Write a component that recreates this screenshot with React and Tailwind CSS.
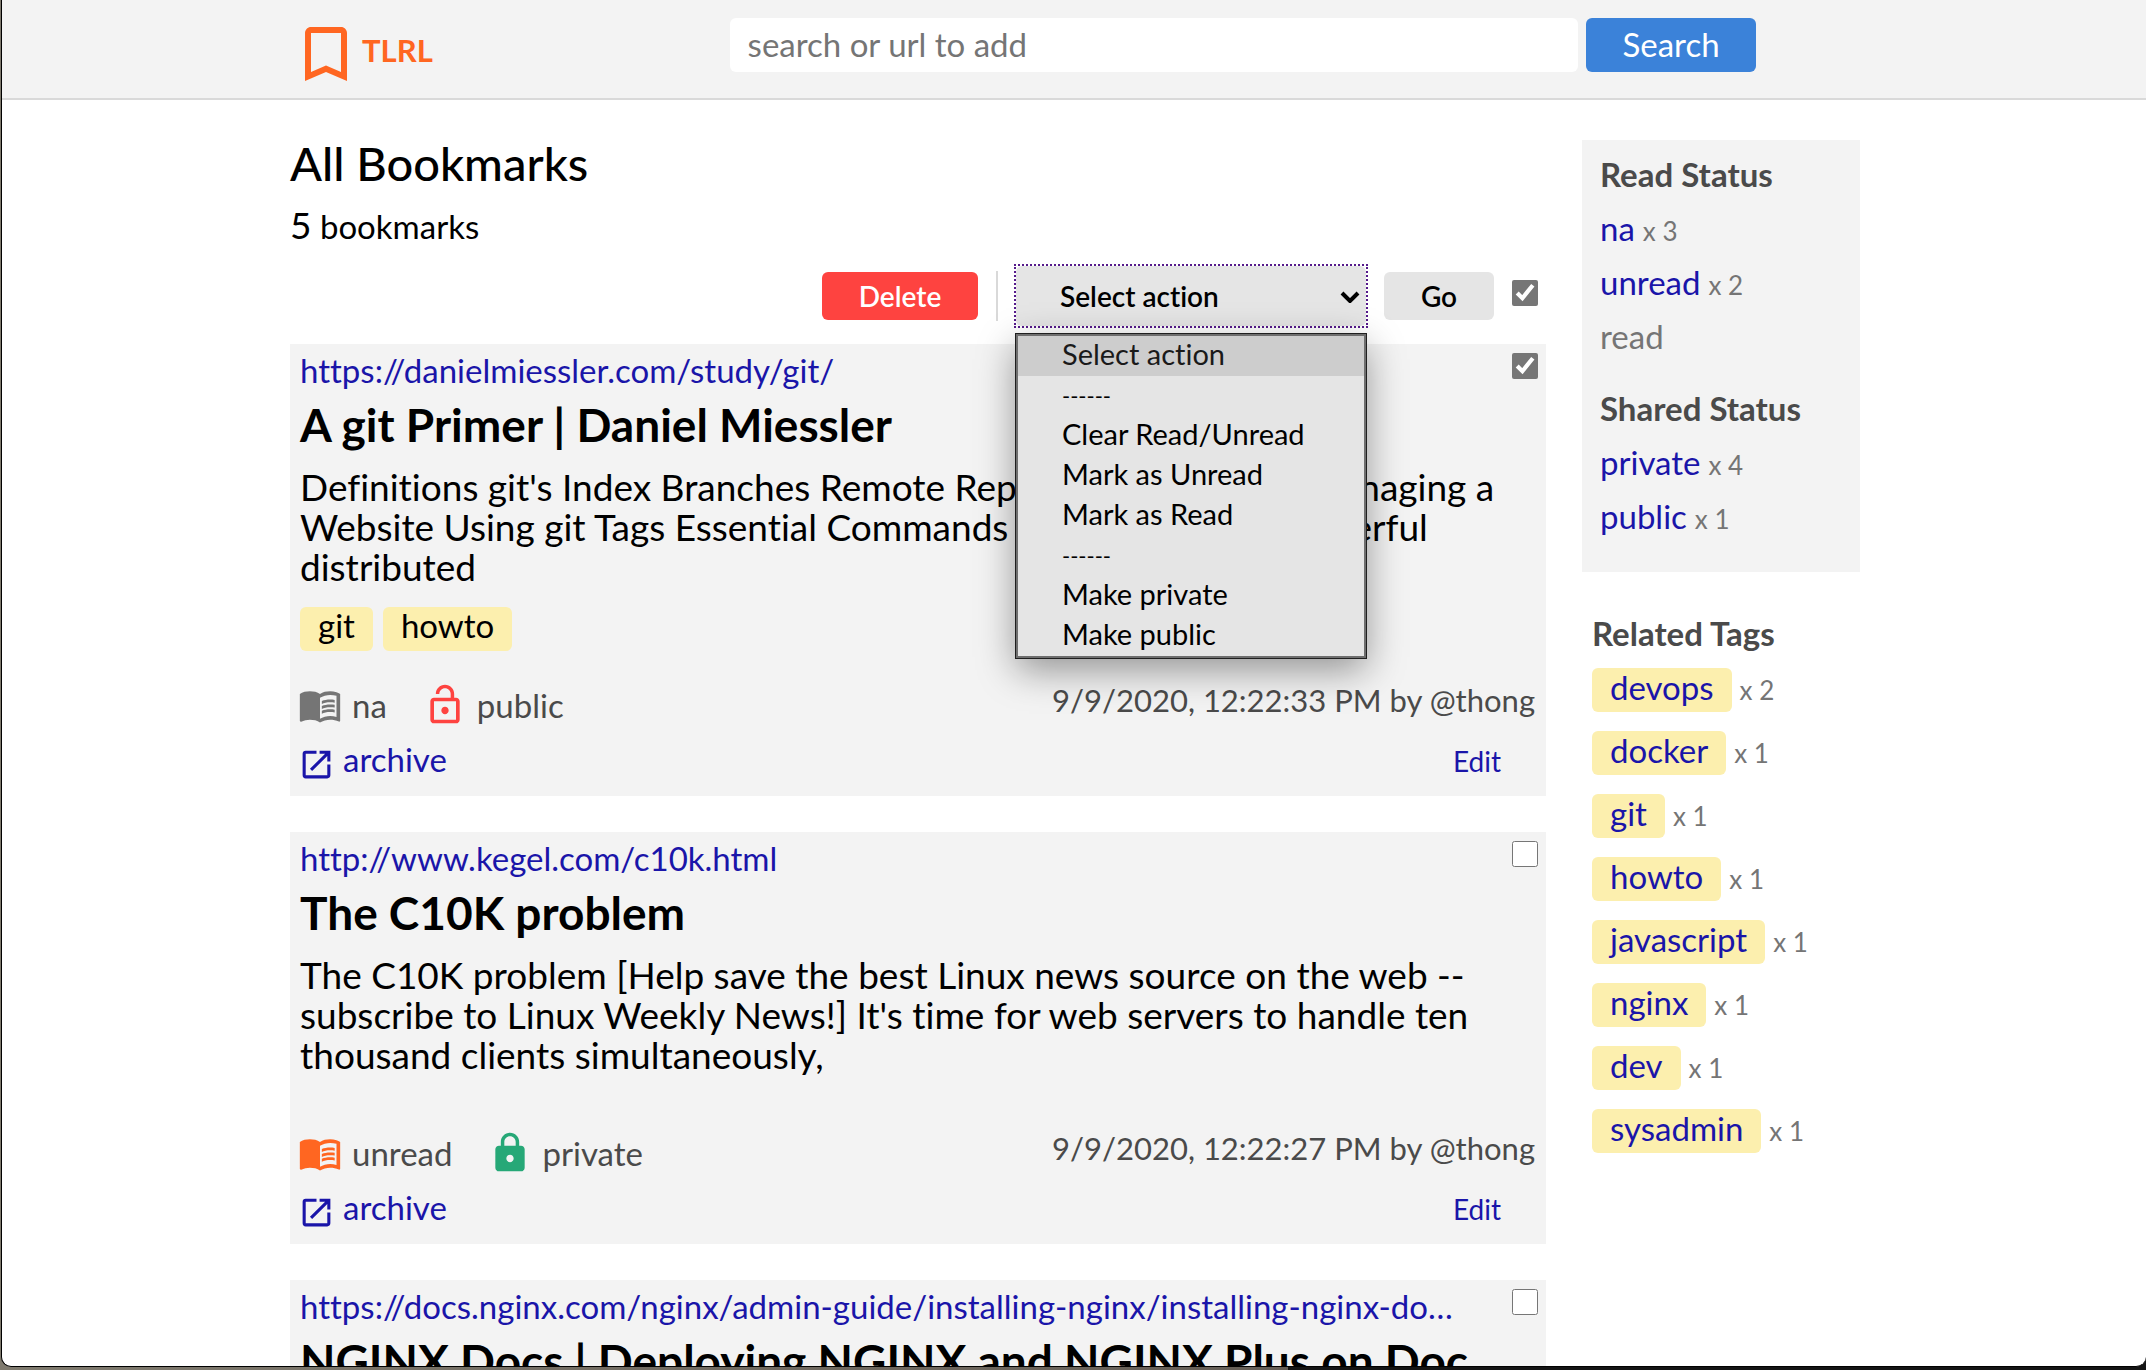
import React from "react";
import { MdBookmarkBorder, MdLock, MdLockOpen, MdMenuBook, MdOpenInNew } from "react-icons/md";

const actions = [
  "Select action",
  "------",
  "Clear Read/Unread",
  "Mark as Unread",
  "Mark as Read",
  "------",
  "Make private",
  "Make public",
];

const bookmarks = [
  {
    id: "git-primer",
    url: "https://danielmiessler.com/study/git/",
    title: "A git Primer | Daniel Miessler",
    text: "Definitions git's Index Branches Remote Repositories Tracking Managing a Website Using git Tags Essential Commands Git is a modern, powerful distributed",
    tags: ["git", "howto"],
    read: "na",
    shared: "public",
    date: "9/9/2020, 12:22:33 PM",
    checked: true,
  },
  {
    id: "c10k",
    url: "http://www.kegel.com/c10k.html",
    title: "The C10K problem",
    text: "The C10K problem [Help save the best Linux news source on the web -- subscribe to Linux Weekly News!] It's time for web servers to handle ten thousand clients simultaneously,",
    tags: [],
    read: "unread",
    shared: "private",
    date: "9/9/2020, 12:22:27 PM",
    checked: false,
  },
  {
    id: "nginx-docs",
    url: "https://docs.nginx.com/nginx/admin-guide/installing-nginx/installing-nginx-do…",
    title: "NGINX Docs | Deploying NGINX and NGINX Plus on Doc",
    checked: false,
  },
];

const readStatus = [["na", 3], ["unread", 2], ["read", 0]];
const sharedStatus = [["private", 4], ["public", 1]];
const relatedTags = [
  ["devops", 2],
  ["docker", 1],
  ["git", 1],
  ["howto", 1],
  ["javascript", 1],
  ["nginx", 1],
  ["dev", 1],
  ["sysadmin", 1],
];

function Check({ label, checked }) {
  return (
    <input
      type="checkbox"
      aria-label={label}
      defaultChecked={checked}
      className="size-[26px] shrink-0 accent-[#767676]"
    />
  );
}

function Header() {
  return (
    <header className="border-b-2 border-[#d9d9d9] bg-[#f3f3f3]">
      <div className="mx-auto flex h-[98px] max-w-[1572px] items-start pt-[18px] pl-0.5">
        <a href="#home" className="flex w-[28%] items-start text-[#ff6621]">
          <MdBookmarkBorder className="size-[72px]" aria-hidden="true" />
          <span className="text-[31px] leading-16 font-bold">TLRL</span>
        </a>
        <form className="mr-[104px] flex flex-1 gap-2" onSubmit={(e) => e.preventDefault()}>
          <input
            type="text"
            aria-label="search or url to add"
            placeholder="search or url to add"
            className="h-[54px] min-w-0 flex-1 rounded-md bg-white px-[18px] pb-0.5 text-[33px] placeholder:text-[#757575]"
          />
          <button type="submit" className="h-[54px] w-[170px] rounded-md bg-[#3b82d9] pb-0.5 text-[33px] leading-10 text-white">
            Search
          </button>
        </form>
      </div>
    </header>
  );
}

function Action({ text, selected }) {
  if (text.startsWith("-")) {
    return (
      <li role="option" aria-selected="false" className="h-10 pl-11 text-[22px] leading-10">
        {text}
      </li>
    );
  }
  return (
    <li
      role="option"
      aria-selected={selected}
      className={
        selected
          ? "h-10 bg-[#cdcdcd] pl-11 text-[29px] leading-9 text-[#1a1a1a]"
          : "h-10 pl-11 text-[29px] leading-9"
      }
    >
      {text}
    </li>
  );
}

function ActionSelect() {
  return (
    <div className="relative outline-2 outline-[#551a8b] outline-dotted">
      <select
        aria-label="Select action"
        className="block h-[60px] w-[350px] appearance-none rounded-md bg-[#e5e5e5] pl-11 text-[28px] font-semibold text-black"
      >
        <option>Select action</option>
      </select>
      <svg
        viewBox="0 0 20 12"
        className="pointer-events-none absolute top-[25px] right-1.5 h-3 w-5"
        fill="none"
        stroke="black"
        strokeWidth="4"
        aria-hidden="true"
      >
        <path d="M2 2l8 8 8-8" />
      </svg>
      <ul
        role="listbox"
        aria-label="Actions"
        className="absolute top-[68px] left-0 z-10 w-[350px] border-2 border-[#6e6e6e] bg-[#e5e5e5] shadow-[0_0_0_1px_#1f1f1f,0_12px_36px_rgba(0,0,0,0.4)]"
      >
        {actions.map((a, i) => (
          <Action key={i} text={a} selected={i === 0} />
        ))}
      </ul>
    </div>
  );
}

function Toolbar() {
  return (
    <div className="mt-5 mb-[18px] flex items-center justify-end gap-[18px] pr-2">
      <button type="button" className="h-12 w-[156px] rounded-md bg-[#fe4340] text-[28px] font-semibold text-white">
        Delete
      </button>
      <div className="flex items-center gap-[18px]">
        <div className="h-[50px] w-0.5 bg-[#d9d9d9]" />
        <ActionSelect />
      </div>
      <button type="button" className="h-12 w-[110px] rounded-md bg-[#e5e5e5] text-[28px] font-semibold">
        Go
      </button>
      <div className="flex pb-1.5">
        <Check label="Select all bookmarks" checked />
      </div>
    </div>
  );
}

function BookmarkDetails({ item }) {
  const LockIcon = item.shared === "public" ? MdLockOpen : MdLock;
  return (
    <>
      <p className="mt-3.5 pr-[22px] text-[37px] leading-10">{item.text}</p>
      <ul className="mt-5 mb-8 flex min-h-1 gap-2.5">
        {item.tags.map((t) => (
          <li key={t} className="h-11 rounded-md bg-[#fcefae] px-[18px] text-[33px] leading-9">
            {t}
          </li>
        ))}
      </ul>
      <div className="flex items-start pr-[3px] text-[33px] leading-11 text-[#4a4a4a]">
        <MdMenuBook
          className={item.read === "unread" ? "-ml-0.5 size-11 text-[#ff6621]" : "-ml-0.5 size-11 text-[#757575]"}
          aria-hidden="true"
        />
        <span className="ml-2.5">{item.read}</span>
        <LockIcon
          className={item.shared === "public" ? "ml-9 size-11 text-[#fe4340]" : "ml-9 size-11 text-[#26a877]"}
          aria-hidden="true"
        />
        <span className="ml-2.5">{item.shared}</span>
        <span className="ml-auto text-[31px] leading-[34px]">{item.date} by @thong</span>
      </div>
      <div className="mt-3 flex h-11 items-start justify-between text-[#1a15a9]">
        <a href="#archive" className="flex h-11 gap-2 text-[33px] leading-10">
          <MdOpenInNew className="-ml-0.5 size-[37px] self-end" aria-hidden="true" />
          <span>archive</span>
        </a>
        <a href="#edit" className="pr-[37px] text-[28px] leading-11">
          Edit
        </a>
      </div>
    </>
  );
}

function Bookmark({ item }) {
  return (
    <article className="bg-[#f3f3f3] pt-1.5 pr-2 pb-[13px] pl-2.5">
      <div className="flex items-start justify-between gap-[46px]">
        <a href={item.url} className="text-[33px] leading-10 whitespace-nowrap text-[#1a15a9]">
          {item.url}
        </a>
        <div className="flex pt-[3px]">
          <Check label={item.title} checked={item.checked} />
        </div>
      </div>
      <h2 className="mt-[7px] text-[46px] leading-[56px] font-bold">{item.title}</h2>
      {item.text && <BookmarkDetails item={item} />}
    </article>
  );
}

function StatusList({ title, items }) {
  return (
    <section>
      <h3 className="font-bold text-[#4a4a4a]">{title}</h3>
      <ul>
        {items.map(([name, count]) => (
          <li key={name} className="flex items-baseline gap-2 text-[#757575]">
            {count > 0 ? (
              <>
                <a href={"#" + name} className="text-[#1a15a9]">
                  {name}
                </a>
                <span className="text-[26px] leading-10">x {count}</span>
              </>
            ) : (
              name
            )}
          </li>
        ))}
      </ul>
    </section>
  );
}

function Sidebar() {
  return (
    <aside className="mt-10 w-[278px] shrink-0 text-[33px] leading-[54px]">
      <div className="flex flex-col gap-[18px] bg-[#f3f3f3] px-[18px] pt-[7px] pb-[29px]">
        <StatusList title="Read Status" items={readStatus} />
        <StatusList title="Shared Status" items={sharedStatus} />
      </div>
      <section className="mt-[34px] pl-2.5">
        <h3 className="font-bold text-[#4a4a4a]">Related Tags</h3>
        <ul className="mt-2 flex flex-col gap-[19px]">
          {relatedTags.map(([name, count]) => (
            <li key={name} className="flex items-baseline gap-2 leading-[38px]">
              <a href={"#" + name} className="h-11 rounded-md bg-[#fcefae] px-[18px] text-[#1a15a9]">
                {name}
              </a>
              <span className="text-[26px] leading-8 text-[#757575]">x {count}</span>
            </li>
          ))}
        </ul>
      </section>
    </aside>
  );
}

export default function App() {
  return (
    <div className="h-screen overflow-hidden bg-[linear-gradient(90deg,#7f7a6e_0,#655e56_60%,#141414_60%)] pb-[3px] pl-px font-['Lato',sans-serif] text-black [font-variant-ligatures:none]">
      <div className="h-full overflow-hidden rounded-b-[10px] border-b border-l border-black bg-white">
        <Header />
        <div className="mx-auto flex max-w-[1572px] items-start gap-9 pl-0.5">
          <main className="min-w-0 flex-1 pt-[35px]">
            <h1 className="text-[47px] leading-[56px] font-medium">All Bookmarks</h1>
            <p className="mt-3.5 text-[33px] leading-10">
              <span className="text-[37px]">5</span> bookmarks
            </p>
            <Toolbar />
            <div className="flex flex-col gap-9">
              {bookmarks.map((b) => (
                <Bookmark key={b.id} item={b} />
              ))}
            </div>
          </main>
          <Sidebar />
        </div>
      </div>
    </div>
  );
}
